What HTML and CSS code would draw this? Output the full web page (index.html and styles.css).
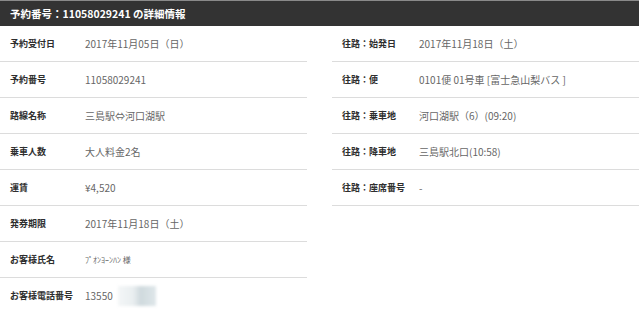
FILE: index.html
```html
<!DOCTYPE html>
<html lang="ja">
<head>
<meta charset="utf-8">
<title>予約詳細</title>
<link rel="stylesheet" href="styles.css">
</head>
<body>
<div class="panel">
  <div class="header">予約番号：11058029241 の詳細情報</div>
  <div class="content">
    <div class="col col-left">
      <div class="row"><div class="label">予約受付日</div><div class="value">2017年11月05日（日）</div></div>
      <div class="row"><div class="label">予約番号</div><div class="value">11058029241</div></div>
      <div class="row"><div class="label">路線名称</div><div class="value">三島駅⇔河口湖駅</div></div>
      <div class="row"><div class="label">乗車人数</div><div class="value">大人料金2名</div></div>
      <div class="row"><div class="label">運賃</div><div class="value">¥4,520</div></div>
      <div class="row"><div class="label">発券期限</div><div class="value">2017年11月18日（土）</div></div>
      <div class="row"><div class="label">お客様氏名</div><div class="value small">ﾌﾟｵﾝﾖｰﾝﾊﾝ 様</div></div>
      <div class="row last"><div class="label">お客様電話番号</div><div class="value">13550<span class="redact"></span></div></div>
    </div>
    <div class="col col-right">
      <div class="row"><div class="label">往路：始発日</div><div class="value">2017年11月18日（土）</div></div>
      <div class="row"><div class="label">往路：便</div><div class="value">0101便 01号車 [富士急山梨バス ]</div></div>
      <div class="row"><div class="label">往路：乗車地</div><div class="value">河口湖駅（6）(09:20)</div></div>
      <div class="row"><div class="label">往路：降車地</div><div class="value">三島駅北口(10:58)</div></div>
      <div class="row"><div class="label">往路：座席番号</div><div class="value">-</div></div>
    </div>
  </div>
</div>
</body>
</html>
```
FILE: styles.css
```css
html, body {
  margin: 0;
  padding: 0;
  background: #fff;
}
body {
  width: 639px;
  height: 313px;
  overflow: hidden;
  font-family: "Noto Sans CJK JP", "Noto Sans", sans-serif;
}
.header {
  height: 25px;
  border-top: 1px solid #8a8a8a;
  background: #333333;
  color: #fff;
  font-weight: bold;
  font-size: 10.5px;
  line-height: 25px;
  padding-left: 10px;
}
.content {
  display: flex;
}
.col-left {
  width: 307px;
}
.col-right {
  margin-left: 25px;
  flex: 1;
}
.row {
  display: flex;
  align-items: center;
  height: 35px;
  border-bottom: 1px solid #dcdcdc;
  font-size: 9px;
}
.row.last {
  border-bottom: none;
}
.label {
  width: 75px;
  padding-left: 10px;
  font-weight: bold;
  color: #2e2e2e;
  flex-shrink: 0;
}
.col-right .label {
  width: 77px;
}
.value {
  color: #666;
  font-size: 10px;
  display: flex;
  align-items: center;
}
.value.small {
  font-size: 8px;
}
.redact {
  display: inline-block;
  width: 38px;
  height: 20px;
  margin-left: 5px;
  background: linear-gradient(90deg, #f4f6f7 0%, #e9eef0 40%, #cfd9dd 60%, #dfe7ea 100%);
  filter: blur(1.5px);
}
```
